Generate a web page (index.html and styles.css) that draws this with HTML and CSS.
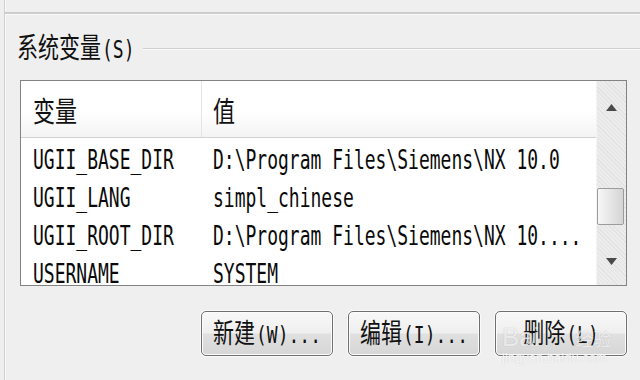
FILE: index.html
```html
<!DOCTYPE html>
<html lang="zh-CN">
<head>
  <meta charset="UTF-8">
  <title>系统变量</title>
  <link rel="stylesheet" href="styles.css">
</head>
<body>
  <div class="frame">
    <div class="prev-group"></div>

    <div class="group">
      <div class="legend">
        <span class="tall legend-text">系统变量<span class="acc">(S)</span></span>
        <span class="legend-line"></span>
      </div>

      <div class="list">
        <div class="table">
          <div class="head">
            <div class="col-name"><span class="tall head-text">变量</span></div>
            <div class="col-value"><span class="tall head-text">值</span></div>
          </div>
          <div class="row">
            <div class="col-name"><span class="tall mono">UGII_BASE_DIR</span></div>
            <div class="col-value"><span class="tall mono">D:\Program Files\Siemens\NX 10.0</span></div>
          </div>
          <div class="row">
            <div class="col-name"><span class="tall mono">UGII_LANG</span></div>
            <div class="col-value"><span class="tall mono">simpl_chinese</span></div>
          </div>
          <div class="row">
            <div class="col-name"><span class="tall mono">UGII_ROOT_DIR</span></div>
            <div class="col-value"><span class="tall mono">D:\Program Files\Siemens\NX 10....</span></div>
          </div>
          <div class="row">
            <div class="col-name"><span class="tall mono">USERNAME</span></div>
            <div class="col-value"><span class="tall mono">SYSTEM</span></div>
          </div>
        </div>

        <div class="scrollbar">
          <div class="arrow arrow-up">
            <svg width="11" height="7" viewBox="0 0 11 7"><path d="M0 7 L5.5 0 L11 7 Z" fill="#4a4a4a"/></svg>
          </div>
          <div class="thumb"></div>
          <div class="arrow arrow-down">
            <svg width="11" height="7" viewBox="0 0 11 7"><path d="M0 0 L11 0 L5.5 7 Z" fill="#4a4a4a"/></svg>
          </div>
        </div>
      </div>

      <div class="buttons">
        <button class="btn"><span class="tall btn-text">新建<span class="acc">(W)...</span></span></button>
        <button class="btn"><span class="tall btn-text">编辑<span class="acc">(I)...</span></span></button>
        <button class="btn">
          <span class="tall btn-text">删除<span class="acc">(L)</span></span>
          <span class="watermark">Bai<span class="wm-cn">经验</span></span>
          <span class="watermark-url">jingyan.baidu.com</span>
        </button>
      </div>
    </div>
  </div>
</body>
</html>
```

FILE: styles.css
```css
body {
  margin: 0;
  width: 640px;
  height: 380px;
  overflow: hidden;
  background: #efefef;
  font-family: "Noto Sans CJK SC", "Liberation Sans", sans-serif;
  color: #111;
}
.frame {
  margin-left: 4px;
  height: 380px;
  border-left: 1px solid #cfcfcf;
  box-shadow: inset 1px 0 0 #fafafa;
}
.prev-group {
  height: 12px;
  border-bottom: 2px solid #cdcdcd;
  box-shadow: 0 1px 0 #fbfbfb;
}
.tall {
  display: inline-block;
  transform: scaleY(1.35);
  transform-origin: center;
  white-space: nowrap;
}
.acc {
  font-family: "DejaVu Sans Mono", "Liberation Mono", monospace;
  font-size: 18px;
  margin-left: 1px;
}
.legend {
  display: flex;
  align-items: center;
  height: 26px;
  margin-top: 20px;
  padding-left: 12px;
}
.legend-text {
  font-size: 21px;
  line-height: 26px;
}
.legend-line {
  flex: 1;
  margin-left: 8px;
  margin-top: 2px;
  height: 1px;
  background: #cfcfcf;
  box-shadow: 0 1px 0 #fbfbfb;
}
.list {
  display: flex;
  margin: 20px 0 0 15px;
  width: 605px;
  height: 204px;
  border: 1px solid #838383;
  background: #fff;
  overflow: hidden;
}
.table {
  flex: 1;
}
.head {
  display: flex;
  height: 56px;
  border-bottom: 1px solid #d2d2d2;
  background: linear-gradient(#ffffff, #ffffff 55%, #f3f3f3);
}
.head .col-name {
  border-right: 1px solid #e4e4e4;
}
.col-name {
  width: 168px;
  padding-left: 12px;
  display: flex;
  align-items: center;
}
.col-value {
  flex: 1;
  padding-left: 12px;
  display: flex;
  align-items: center;
}
.head-text {
  font-size: 22px;
  transform: scaleY(1.3);
}
.head .col-value {
  padding-left: 11px;
}
.table .head + .row {
  margin-top: 3px;
}
.row {
  display: flex;
  height: 38px;
}
.mono {
  font-family: "DejaVu Sans Mono", "Liberation Mono", monospace;
  font-size: 18px;
  transform: scaleY(1.5);
  line-height: 20px;
  color: #0a0a0a;
}
.scrollbar {
  width: 29px;
  display: flex;
  flex-direction: column;
  background: repeating-linear-gradient(45deg, #ececec 0 2px, #e3e3e3 2px 3px);
  border-left: 1px solid #f4f4f4;
}
.arrow {
  display: flex;
  justify-content: center;
}
.arrow-up {
  height: 52px;
  align-items: center;
}
.arrow-down {
  margin-top: auto;
  height: 48px;
  align-items: center;
}
.thumb {
  margin-top: 55px;
  height: 35px;
  width: 25px;
  border: 1px solid #9c9c9c;
  border-radius: 2px;
  background: linear-gradient(90deg, #f7f7f7, #e2e2e2 60%, #d4d4d4);
}
.buttons {
  display: flex;
  gap: 15px;
  margin: 25px 0 0 196px;
}
.btn {
  position: relative;
  width: 132px;
  height: 45px;
  border: 1px solid #6f6f6f;
  border-radius: 5px;
  background: linear-gradient(#f8f8f8, #efefef 48%, #e0e0e0 52%, #d6d6d6);
  box-shadow: inset 0 0 0 1px #fcfcfc, 0 0 0 1px #fafafa;
  font-family: "Noto Sans CJK SC", "Liberation Sans", sans-serif;
  color: #111;
  padding: 0;
}
.btn-text {
  font-size: 21px;
  line-height: 26px;
  transform: scaleY(1.3);
}
.watermark {
  position: absolute;
  left: 6px;
  top: 10px;
  font-family: "Liberation Sans", sans-serif;
  font-size: 26px;
  color: rgba(255, 255, 255, 0.7);
  text-shadow: 0 0 1px rgba(150, 150, 150, 0.5);
}
.wm-cn {
  font-family: "Noto Sans CJK SC", sans-serif;
  font-size: 18px;
  margin-left: 36px;
}
.watermark-url {
  position: absolute;
  left: 6px;
  bottom: -10px;
  font-family: "Liberation Sans", sans-serif;
  font-size: 13px;
  color: rgba(255, 255, 255, 0.85);
  text-shadow: 0 0 1px rgba(160, 160, 160, 0.5);
}
```
